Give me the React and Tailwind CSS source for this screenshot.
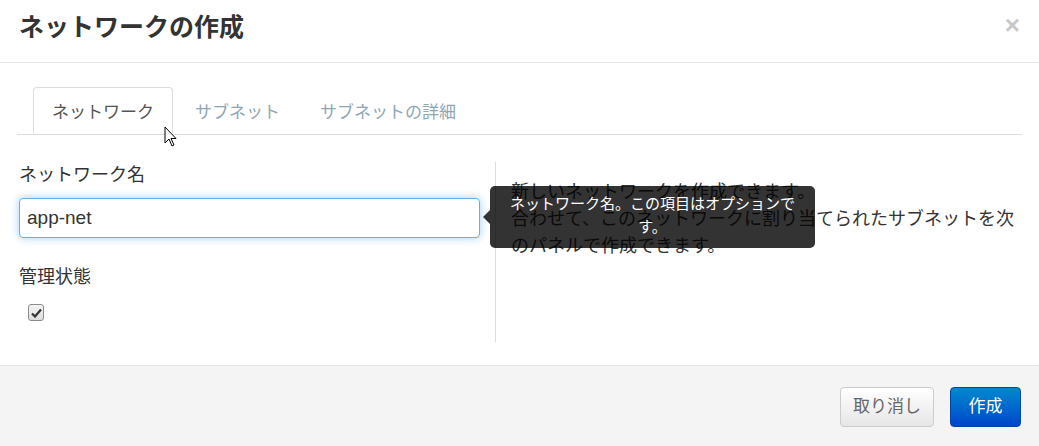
import React from "react";

const Cursor = () => (
  <svg
    className="absolute left-[164px] top-[126px]"
    width="14"
    height="22"
    viewBox="0 0 14 22"
  >
    <path
      d="M1 1 L1 17 L5 13 L8 20 L10 19 L7 12.5 L12 12.5 Z"
      fill="#fff"
      stroke="#000"
      strokeWidth="1"
      strokeLinejoin="miter"
    />
  </svg>
);

const App = () => {
  const tabs = ["ネットワーク", "サブネット", "サブネットの詳細"];

  return (
    <div className="relative w-[1039px] h-[446px] bg-white overflow-hidden font-['Liberation_Sans','Noto_Sans_CJK_JP',sans-serif] text-[#333]">
      {/* header */}
      <div className="h-[63px] border-b border-[#e5e5e5] flex items-start justify-between pl-[19px] pr-[19px] pt-[12px]">
        <h3 className="text-[25px] leading-[30px] font-bold text-[#333]">
          ネットワークの作成
        </h3>
        <button className="text-[26px] leading-[26px] font-bold text-[#c8c8c8] mt-[0px]">
          ×
        </button>
      </div>

      {/* tabs */}
      <div className="px-[17px] pt-[24px]">
        <ul className="flex border-b border-[#ddd] pl-[16px] mr-[0px] w-[1005px]">
          {tabs.map((t, i) => (
            <li
              key={t}
              className={
                i === 0
                  ? "h-[47px] px-[18px] pt-[5px] mr-[4px] -mb-px flex items-center text-[17px] text-[#555] bg-white border border-[#ddd] border-b-white rounded-t-[4px]"
                  : "h-[47px] px-[18px] pt-[5px] mr-[4px] flex items-center text-[17px] text-[#8fa6b4]"
              }
            >
              {t}
            </li>
          ))}
        </ul>
      </div>

      {/* body */}
      <div className="flex pl-[19px] pt-[27px] h-[230px]">
        <div className="w-[461px]">
          <label className="block text-[18px] leading-[27px]">
            ネットワーク名
          </label>
          <div className="mt-[9px] h-[40px] w-[461px] rounded-[4px] border border-[#66afe9] shadow-[0_0_8px_rgba(102,175,233,0.6)] flex items-center px-[7px] text-[19px] text-[#333]">
            app-net
          </div>
          <label className="block mt-[26px] text-[18px] leading-[27px]">
            管理状態
          </label>
          <div className="mt-[13px] ml-[9px] w-[16px] h-[17px] rounded-[3px] border border-[#8c8c8c] bg-gradient-to-b from-[#f4f4f4] to-[#dcdcdc] flex items-center justify-center">
            <svg width="11" height="10" viewBox="0 0 11 10">
              <path
                d="M1 5.5 L4 8.5 L10 1.5"
                fill="none"
                stroke="#333"
                strokeWidth="2.2"
              />
            </svg>
          </div>
        </div>
        <div className="ml-[15px] w-px h-[180px] bg-[#ddd]" />
        <div className="pl-[15px] pt-[17px] text-[18px] leading-[27px] text-[#333]">
          <span className="block whitespace-nowrap">新しいネットワークを作成できます。</span>
          <span className="block whitespace-nowrap">合わせて、このネットワークに割り当てられたサブネットを次</span>
          <span className="block whitespace-nowrap">のパネルで作成できます。</span>
        </div>
      </div>

      {/* footer */}
      <div className="h-[82px] border-t border-[#e5e5e5] bg-[#f4f4f4] flex justify-end items-start pt-[21px] pr-[18px] gap-[16px]">
        <button className="w-[94px] h-[40px] rounded-[4px] border border-[#ccc] bg-gradient-to-b from-white to-[#e6e6e6] text-[17px] text-[#666] shadow-[inset_0_1px_0_rgba(255,255,255,0.2)]">
          取り消し
        </button>
        <button className="w-[71px] h-[40px] rounded-[4px] border border-[#0044aa] bg-gradient-to-b from-[#0088cc] to-[#0044cc] text-[17px] text-white">
          作成
        </button>
      </div>

      {/* tooltip over the description */}
      <div className="absolute left-[490px] top-[186px] w-[325px] h-[62px] rounded-[5px] bg-black/80 text-white text-[15px] leading-[23px] text-center pt-[6px]">
        <div className="absolute left-[-7px] top-[24px] w-0 h-0 border-y-[7px] border-y-transparent border-r-[7px] border-r-black/80" />
        <span className="block whitespace-nowrap">ネットワーク名。この項目はオプションで</span>
        <span className="block">す。</span>
      </div>

      <Cursor />
    </div>
  );
};

export default App;
